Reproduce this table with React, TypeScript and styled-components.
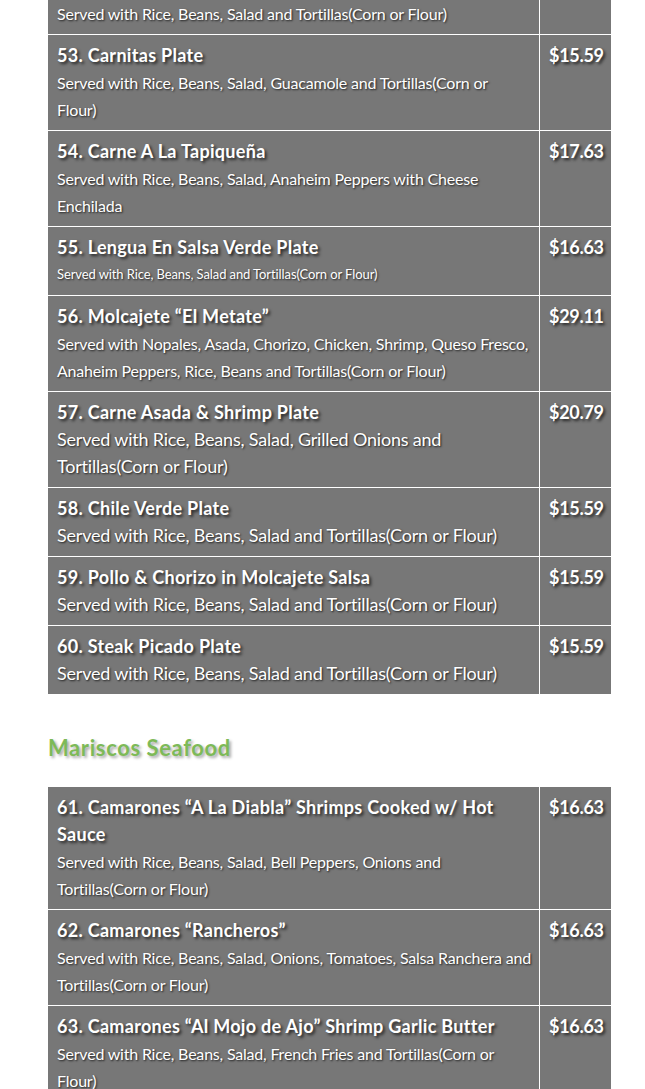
import React from 'react';
import styled, { createGlobalStyle } from 'styled-components';

const GlobalStyle = createGlobalStyle`
  html, body {
    margin: 0;
    padding: 0;
    background: #fff;
  }
  body {
    font-family: Lato, "Noto Sans", sans-serif;
  }
`;

const Page = styled.div`
  width: 563px;
  margin-left: 48px;
`;

const Table = styled.div`
  display: flex;
  flex-direction: column;
  gap: 1px;
  background: #fff;
`;

const Row = styled.div`
  display: grid;
  grid-template-columns: 491px 71px;
  column-gap: 1px;
`;

const Cell = styled.div<{ $cut?: boolean }>`
  background: #777777;
  color: #fff;
  padding: ${(p) => (p.$cut ? '0 4px 7px 9px' : '7px 4px 7px 9px')};
  box-sizing: border-box;
`;

const Title = styled.div`
  font-size: 18px;
  font-weight: 700;
  line-height: 27px;
  letter-spacing: 0.3px;
  text-shadow: 2px 2px 3px rgba(0, 0, 0, 0.7);
`;

const Desc = styled.div<{ $size: number }>`
  font-size: ${(p) => p.$size}px;
  line-height: 27px;
  letter-spacing: ${(p) => (p.$size < 14 ? '-0.1px' : '-0.2px')};
  white-space: pre-line;
  text-shadow: 1px 1px 2px rgba(0, 0, 0, 0.75);
`;

const Price = styled.div`
  font-size: 18px;
  font-weight: 700;
  line-height: 27px;
  letter-spacing: -0.3px;
  text-shadow: 2px 2px 3px rgba(0, 0, 0, 0.7);
`;

const Heading = styled.h2`
  margin: 40px 0 25px;
  font-size: 22px;
  line-height: 28px;
  font-weight: 700;
  letter-spacing: 0.6px;
  color: #7dba58;
  text-shadow: 2px 2px 3px rgba(0, 0, 0, 0.35);
`;

type Item = { title?: string; desc: string; size: number; price?: string };

const plates: Item[] = [
  { desc: 'Served with Rice, Beans, Salad and Tortillas(Corn or Flour)', size: 16 },
  { title: '53. Carnitas Plate', desc: 'Served with Rice, Beans, Salad, Guacamole and Tortillas(Corn or\nFlour)', size: 16, price: '$15.59' },
  { title: '54. Carne A La Tapiqueña', desc: 'Served with Rice, Beans, Salad, Anaheim Peppers with Cheese\nEnchilada', size: 16, price: '$17.63' },
  { title: '55. Lengua En Salsa Verde Plate', desc: 'Served with Rice, Beans, Salad and Tortillas(Corn or Flour)', size: 13, price: '$16.63' },
  { title: '56. Molcajete “El Metate”', desc: 'Served with Nopales, Asada, Chorizo, Chicken, Shrimp, Queso Fresco,\nAnaheim Peppers, Rice, Beans and Tortillas(Corn or Flour)', size: 16, price: '$29.11' },
  { title: '57. Carne Asada & Shrimp Plate', desc: 'Served with Rice, Beans, Salad, Grilled Onions and\nTortillas(Corn or Flour)', size: 18, price: '$20.79' },
  { title: '58. Chile Verde Plate', desc: 'Served with Rice, Beans, Salad and Tortillas(Corn or Flour)', size: 18, price: '$15.59' },
  { title: '59. Pollo & Chorizo in Molcajete Salsa', desc: 'Served with Rice, Beans, Salad and Tortillas(Corn or Flour)', size: 18, price: '$15.59' },
  { title: '60. Steak Picado Plate', desc: 'Served with Rice, Beans, Salad and Tortillas(Corn or Flour)', size: 18, price: '$15.59' },
];

const seafood: Item[] = [
  { title: '61. Camarones “A La Diabla” Shrimps Cooked w/ Hot Sauce', desc: 'Served with Rice, Beans, Salad, Bell Peppers, Onions and\nTortillas(Corn or Flour)', size: 16, price: '$16.63' },
  { title: '62. Camarones “Rancheros”', desc: 'Served with Rice, Beans, Salad, Onions, Tomatoes, Salsa Ranchera and\nTortillas(Corn or Flour)', size: 16, price: '$16.63' },
  { title: '63. Camarones “Al Mojo de Ajo” Shrimp Garlic Butter', desc: 'Served with Rice, Beans, Salad, French Fries and Tortillas(Corn or\nFlour)', size: 16, price: '$16.63' },
];

const MenuTable: React.FC<{ items: Item[] }> = ({ items }) => (
  <Table>
    {items.map((it, i) => (
      <Row key={i}>
        <Cell $cut={!it.title}>
          {it.title && <Title>{it.title}</Title>}
          <Desc $size={it.size}>{it.desc}</Desc>
        </Cell>
        <Cell $cut={!it.title}>{it.price && <Price>{it.price}</Price>}</Cell>
      </Row>
    ))}
  </Table>
);

export default function App() {
  return (
    <>
      <GlobalStyle />
      <Page>
        <MenuTable items={plates} />
        <Heading>Mariscos Seafood</Heading>
        <MenuTable items={seafood} />
      </Page>
    </>
  );
}
